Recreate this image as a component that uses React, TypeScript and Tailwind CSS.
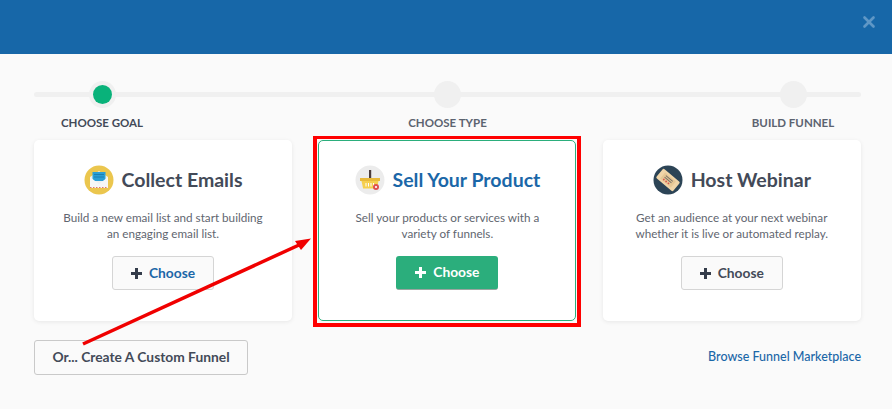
import { X } from "lucide-react";

const font = "font-['Lato','Liberation_Sans',sans-serif]";

function EmailIcon() {
  return (
    <svg width="30" height="30" viewBox="0 0 30 30" className="shrink-0">
      <circle cx="15" cy="15" r="14.5" fill="#ebc64e" />
      <path d="M6 12 15 6l9 6v11H6z" fill="#eef0f0" />
      <rect x="8.5" y="7" width="13" height="9" fill="#2a9fd6" />
      <path d="M10 9.5h10M10 12h10" stroke="#1b7fb3" strokeWidth="1" />
      <path d="M6 12l9 7 9-7v11H6z" fill="#f6f7f7" />
      <path d="M6 22.5h18" stroke="#e0796b" strokeWidth="1" strokeDasharray="1.5 1.5" />
    </svg>
  );
}

function BasketIcon() {
  return (
    <svg width="30" height="30" viewBox="0 0 30 30" className="shrink-0">
      <circle cx="15" cy="15" r="14.5" fill="#ececec" />
      <rect x="14" y="5" width="2.2" height="9" fill="#4a3b3b" />
      <rect x="5" y="13" width="20" height="3" fill="#e8b93a" />
      <path d="M6.5 16h17l-1.6 7.5H8.100z" fill="#f5cf4e" />
      <path d="M11 18v3.500M13.500 18v3.500M16 18v3.500M18.500 18v3.500" stroke="#fff" strokeWidth="1" />
      <circle cx="21" cy="22" r="3" fill="#df4f4f" />
      <circle cx="21" cy="22" r="1.100" fill="#fff" />
    </svg>
  );
}

function TicketIcon() {
  return (
    <svg width="30" height="30" viewBox="0 0 30 30" className="shrink-0">
      <circle cx="15" cy="15" r="14.5" fill="#2c4456" />
      <g transform="rotate(40 15 15)">
        <rect x="4" y="9" width="22" height="12" rx="1.500" fill="#f0d5a8" />
        <rect x="8" y="11" width="14" height="8" fill="#e6c795" />
        <path d="M10.500 13h9M10.500 15h9" stroke="#7a7268" strokeWidth="1" />
        <circle cx="11.500" cy="17.300" r="0.900" fill="#d9534f" />
        <circle cx="14.500" cy="17.300" r="0.900" fill="#d9534f" />
        <circle cx="17.500" cy="17.300" r="0.900" fill="#d9534f" />
      </g>
    </svg>
  );
}

function PlusMark({ color }: { color: string }) {
  return (
    <svg width="11" height="11" viewBox="0 0 11 11" className={`shrink-0 ${color}`}>
      <path d="M5.500 0v11M0 5.500h11" stroke="currentColor" strokeWidth="3" />
    </svg>
  );
}

function FunnelCard({
  icon,
  title,
  lines,
  active,
  hint,
}: {
  icon: React.ReactNode;
  title: string;
  lines: string[];
  active?: boolean;
  hint?: boolean;
}) {
  return (
    <div
      className={`h-[181px] rounded-[5px] bg-white flex flex-col items-center ${
        active ? "border border-[#2bae7c] pt-[24px]" : "pt-[25px] shadow-[0_1px_4px_rgba(0,0,0,0.08)]"
      }`}
    >
      <div className="flex items-center gap-[8px] h-[30px]">
        {icon}
        <span className={`text-[19.500px] font-bold ${active ? "text-[#1b67a8]" : "text-[#434a58]"}`}>{title}</span>
      </div>
      <p className="mt-[14px] text-center text-[11.700px] leading-[16px] text-[#5f6670]">
        {lines.map((l) => (
          <span key={l} className="block">
            {l}
          </span>
        ))}
      </p>
      <button
        className={`mt-[15px] w-[102px] h-[34px] rounded-[3px] flex items-center justify-center gap-[7px] text-[13.800px] font-bold ${
          active
            ? "bg-[#2bae7c] text-white border-b border-b-[#9aa5a0]"
            : "bg-[#fafafa] border border-[#d5d5d5] " + (hint ? "text-[#1b67a8]" : "text-[#434a58]")
        }`}
      >
        <PlusMark color={active ? "text-white" : "text-[#343c4a]"} />
        Choose
      </button>
    </div>
  );
}

export default function App() {
  return (
    <div className={`relative w-[892px] h-[409px] overflow-hidden bg-[#fafafa] ${font}`}>
      <div className="h-[54px] bg-[#1767a8] flex items-start justify-end pt-[13px] pr-[14px]">
        <X size={18} strokeWidth={3.5} className="text-[#5f97c6]" />
      </div>

      <div className="pl-[34px] pr-[31px] pt-[38px]">
        {/* Steps */}
        <div className="h-[5px] rounded-full bg-[#f0f0f0] flex items-center justify-between px-[54.500px]">
          <div className="w-[27px] h-[27px] rounded-full bg-[#f0f0f0] flex items-center justify-center shrink-0">
            <div className="w-[19px] h-[19px] rounded-full bg-[#09b27a]" />
          </div>
          <div className="w-[27px] h-[27px] rounded-full bg-[#f0f0f0] shrink-0" />
          <div className="w-[27px] h-[27px] rounded-full bg-[#f0f0f0] shrink-0" />
        </div>
        <div className="mt-[19px] h-[14px] flex justify-between px-[8px] text-[11.500px] leading-[14px] font-bold">
          <span className="w-[120px] text-center text-[#434a58]">CHOOSE GOAL</span>
          <span className="w-[120px] text-center text-[#5c6370]">CHOOSE TYPE</span>
          <span className="w-[120px] text-center text-[#5c6370]">BUILD FUNNEL</span>
        </div>

        {/* Cards */}
        <div className="mt-[10px] grid grid-cols-[258px_258px_258px] gap-x-[26.400px]">
          <FunnelCard
            icon={<EmailIcon />}
            title="Collect Emails"
            lines={["Build a new email list and start building", "an engaging email list."]}
            hint
          />
          <FunnelCard
            icon={<BasketIcon />}
            title="Sell Your Product"
            lines={["Sell your products or services with a", "variety of funnels."]}
            active
          />
          <FunnelCard
            icon={<TicketIcon />}
            title="Host Webinar"
            lines={["Get an audience at your next webinar", "whether it is live or automated replay."]}
          />
        </div>

        {/* Footer */}
        <div className="mt-[19px] flex items-center justify-between">
          <button className="w-[214px] h-[35px] rounded-[3px] border border-[#c9c9c9] bg-[#fafafa] text-[13.800px] font-bold text-[#434a58]">
            Or... Create A Custom Funnel
          </button>
          <a className="text-[12.500px] text-[#1b67a8] font-medium">Browse Funnel Marketplace</a>
        </div>
      </div>

      {/* Annotation drawn on top of the screenshot */}
      <div className="absolute left-[313px] top-[136px] w-[268px] h-[191px] border-[4px] border-t-[3px] border-[#ff0000] pointer-events-none" />
      <svg className="absolute left-0 top-0 pointer-events-none" width="892" height="409">
        <line x1="83" y1="344" x2="299" y2="245" stroke="#f00000" strokeWidth="3.500" />
        <path d="M311 238.500 295 241l6 9z" fill="#f00000" />
      </svg>
    </div>
  );
}
